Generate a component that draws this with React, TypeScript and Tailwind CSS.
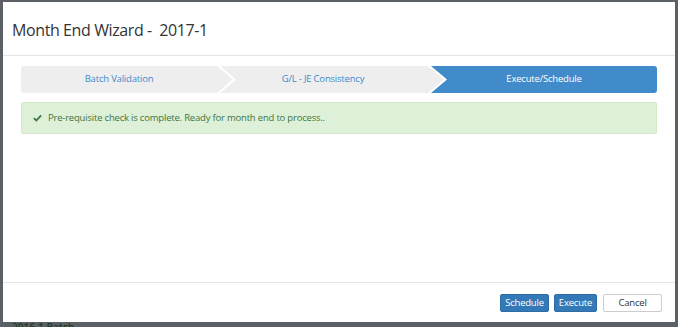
import React from "react";

const font = { fontFamily: '"Open Sans", "Liberation Sans", sans-serif' };

export default function App() {
  return (
    <div
      className="w-[678px] h-[327px] bg-[#5b6067] relative overflow-hidden"
      style={font}
    >
      <div className="absolute left-[12px] top-[321px] text-[10px] leading-[12px] text-[#1d3b1d] font-semibold">2016-1 Batch</div>
      <div className="absolute left-[3px] top-[2px] w-[672px] h-[320px] bg-white flex flex-col">
        <div className="h-[54px] border-b border-[#e5e5e5] flex items-center pl-[9px] pt-[2px]">
          <span className="text-[16px] text-[#333] tracking-[-0.4px]">Month End Wizard -&nbsp; 2017-1</span>
        </div>
        <div className="flex-1 px-[18px] pt-[10px]">
          <div className="flex h-[27px] text-[9.5px] tracking-[-0.2px]">
            <div className="w-[212px] shrink-0 bg-[#eeeeee] text-[#428bca] flex items-center justify-center pr-[16px] rounded-l-[3px] [clip-path:polygon(0_0,calc(100%-16px)_0,100%_50%,calc(100%-16px)_100%,0_100%)]">
              Batch Validation
            </div>
            <div className="w-[224px] shrink-0 -ml-[13px] bg-[#eeeeee] text-[#428bca] flex items-center justify-center pr-[18px] [clip-path:polygon(0_0,calc(100%-16px)_0,100%_50%,calc(100%-16px)_100%,0_100%,16px_50%)]">
              G/L - JE Consistency
            </div>
            <div className="flex-1 -ml-[13px] bg-[#428bca] text-white flex items-center justify-center rounded-r-[3px] [clip-path:polygon(0_0,100%_0,100%_100%,0_100%,16px_50%)]">
              Execute/Schedule
            </div>
          </div>
          <div className="mt-[9px] h-[32px] bg-[#dff0d8] border border-[#d6e9c6] rounded-[2px] flex items-center pl-[11px] text-[9.5px] tracking-[-0.2px] text-[#3c763d]">
            <svg width="9" height="8" viewBox="0 0 10 8" className="mr-[6px]">
              <path d="M1 4.2 L3.7 6.8 L9 1.2" stroke="#3c763d" strokeWidth="2" fill="none" />
            </svg>
            Pre-requisite check is complete. Ready for month end to process..
          </div>
        </div>
        <div className="h-[40px] border-t border-[#e5e5e5] flex justify-end items-start pt-[11px] pr-[13px] gap-[5px] text-[9.5px] tracking-[-0.2px]">
          <button className="h-[18px] w-[49px] bg-[#3479b7] border border-[#2e6da4] text-white rounded-[2px] leading-none">Schedule</button>
          <button className="h-[18px] w-[43px] bg-[#3479b7] border border-[#2e6da4] text-white rounded-[2px] leading-none">Execute</button>
          <button className="h-[18px] w-[59px] ml-[1px] bg-white border border-[#cccccc] text-[#333] rounded-[2px] leading-none">Cancel</button>
        </div>
      </div>
    </div>
  );
}
